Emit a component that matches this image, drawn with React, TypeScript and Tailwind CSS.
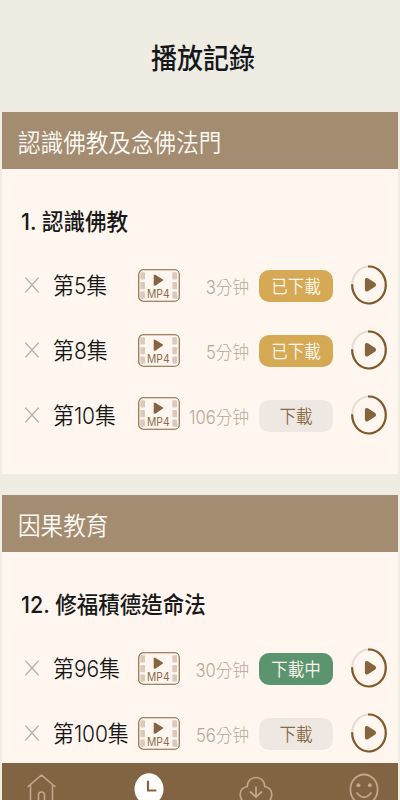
import React from "react";

type Status = "done" | "idle" | "loading";

interface Episode {
    label: string;
    minutes: number;
    status: Status;
    badgeClass?: string;
}

interface Course {
    category: string;
    title: string;
    episodes: Episode[];
}

const courses: Course[] = [
    {
        category: "認識佛教及念佛法門",
        title: "1. 認識佛教",
        episodes: [
            { label: "第5集", minutes: 3, status: "done" },
            { label: "第8集", minutes: 5, status: "done" },
            { label: "第10集", minutes: 106, status: "idle", badgeClass: "mb-[5px]" },
        ],
    },
    {
        category: "因果教育",
        title: "12. 修福積德造命法",
        episodes: [
            { label: "第96集", minutes: 30, status: "loading" },
            { label: "第100集", minutes: 56, status: "idle" },
        ],
    },
];

const statusStyles: Record<Status, { text: string; className: string }> = {
    done: { text: "已下載", className: "bg-[#d6aa54] text-[#fff7ee]" },
    idle: { text: "下載", className: "bg-[#efe8e2] text-[#8a6a45]" },
    loading: { text: "下載中", className: "bg-[#5b956f] text-[#fff7ee]" },
};

const CloseIcon = () => (
    <svg className="mb-[2px]" width="14" height="16" viewBox="0 0 14 16" fill="none" stroke="#c0ad9d" strokeWidth="1.2" strokeLinecap="round">
        <path d="M.7 1l12.6 14M13.3 1L.7 15" />
    </svg>
);

const Mp4Icon = () => (
    <svg width="42" height="33" viewBox="0 0 42 33">
        <rect x=".75" y=".75" width="40.5" height="31.5" rx="4.5" fill="none" stroke="#8a6238" strokeWidth="1.1" />
        <g fill="#d9cabd">
            <rect x="2.3" y="3.3" width="4.7" height="7.2" rx="1" />
            <rect x="2.3" y="13" width="4.7" height="7.2" rx="1" />
            <rect x="2.3" y="22.5" width="4.7" height="7.2" rx="1" />
            <rect x="34.3" y="3.3" width="4.7" height="7.2" rx="1" />
            <rect x="34.3" y="13" width="4.7" height="7.2" rx="1" />
            <rect x="34.3" y="22.5" width="4.7" height="7.2" rx="1" />
        </g>
        <path d="M16.7 6.6L24 11L16.7 15.8Z" fill="#86643f" stroke="#86643f" strokeWidth="2" strokeLinejoin="round" />
        <text x="20.3" y="29.4" textAnchor="middle" fontSize="11.6" fill="#8a6a48" fontFamily="Inter, sans-serif" textLength="22.5" lengthAdjust="spacingAndGlyphs">
            MP4
        </text>
    </svg>
);

const PlayIcon = () => (
    <svg width="36" height="40" viewBox="0 0 36 40">
        <ellipse cx="18" cy="20" rx="16.8" ry="18.5" fill="none" stroke="#e6dcd4" strokeWidth="2" />
        <path d="M17 1.5H18A16.8 18.5 0 1 1 1.2 19.2" fill="none" stroke="#81592a" strokeWidth="2.2" />
        <path d="M15 15.2Q15 13.8 16.3 14.3L23.3 18.7Q24.7 19.8 23.3 20.9L16.3 25.3Q15 25.8 15 24.5Z" fill="#86643f" stroke="#86643f" strokeWidth="2.2" strokeLinejoin="round" />
    </svg>
);

const EpisodeRow: React.FC<{ episode: Episode }> = ({ episode }) => {
    const status = statusStyles[episode.status];

    return (
        <div className="flex h-[65px] items-center pl-[23px] pr-[11px]">
            <CloseIcon />
            <div className="ml-[14px] w-[85px] shrink-0">
                <span className="inline-block origin-left scale-y-[1.1] whitespace-nowrap text-[21px] font-[350] leading-8 tracking-[-0.1px] text-[#161616]">
                    {episode.label}
                </span>
            </div>
            <div className={episode.badgeClass}>
                <Mp4Icon />
            </div>
            <div className="flex-1 pr-[10px] pt-[3px] text-right">
                <span className="inline-block scale-y-[1.1] whitespace-nowrap text-[16.6px] font-light leading-6 text-[#b9a793]">
                    {episode.minutes}分钟
                </span>
            </div>
            <button className={`h-8 w-[74px] shrink-0 rounded-[10px] text-[16.5px] font-[350] leading-8 ${status.className}`}>
                <span className="inline-block scale-y-[1.1]">{status.text}</span>
            </button>
            <div className="mb-px ml-[18px] shrink-0">
                <PlayIcon />
            </div>
        </div>
    );
};

const BottomNav = () => (
    <nav className="relative mx-[2px] flex h-[37px] shrink-0 items-start justify-between overflow-hidden bg-[#836442] pl-6 pr-[19px] pt-[9px]">
        <svg className="shrink-0" width="32" height="34" viewBox="0 0 32 34" fill="none" stroke="#bda78d" strokeWidth="1.6" strokeLinecap="round" strokeLinejoin="round">
            <path d="M2 14.5L15.5 3.2L29 14.5M4.5 12.5V32H26.5V12.5M12.5 32V23Q12.5 20 15.5 20T18.5 23V32" />
        </svg>
        <svg className="shrink-0" width="30" height="34" viewBox="0 0 30 34">
            <ellipse cx="15" cy="17" rx="14.5" ry="15.7" fill="#fffefc" />
            <path d="M14 9.5V18.5H21.5" fill="none" stroke="#86643f" strokeWidth="2.2" strokeLinecap="round" strokeLinejoin="round" />
        </svg>
        <svg className="shrink-0" width="34" height="34" viewBox="0 0 34 34" fill="none" stroke="#bda78d" strokeWidth="1.7" strokeLinecap="round" strokeLinejoin="round">
            <path d="M9 31C4 31 1.2 27 1.2 22.5C1.2 18 4.2 15.3 8.2 14.5C8.2 9 12.2 5.5 17 5.5S25.8 9 25.8 14.5C29.8 15.3 32.8 18 32.8 22.5C32.8 27 30 31 25 31Z" />
            <path d="M17 15V25M11.5 20L17 25L22.5 20" />
        </svg>
        <svg className="shrink-0" width="30" height="34" viewBox="0 0 30 34" fill="none" stroke="#bda78d" strokeWidth="1.8" strokeLinecap="round">
            <ellipse cx="15" cy="17.5" rx="13.6" ry="15" />
            <path d="M8 21Q15 29.5 22 21" />
            <circle cx="9.4" cy="13.3" r="2" fill="#bda78d" stroke="none" />
            <circle cx="20.8" cy="13.3" r="2" fill="#bda78d" stroke="none" />
        </svg>
    </nav>
);

const App: React.FC = () => {
    return (
        <div className="flex h-[800px] w-[400px] flex-col overflow-hidden bg-[#efece4] font-[Inter,'Noto_Sans_CJK_TC',sans-serif]">
            <header className="flex h-28 shrink-0 items-center justify-center pl-[6px] pt-[5px]">
                <h1 className="scale-y-[1.1] text-[26px] font-medium leading-9 text-[#15181b]">播放記錄</h1>
            </header>

            <main className="min-h-0 flex-1 overflow-hidden">
                {courses.map((course) => (
                    <section key={course.title} className="mx-[2px] mb-[21px] bg-[#fef6ef]">
                        <div className="flex h-[57px] items-center bg-[#a48c71] pl-4 pt-[4px]">
                            <h2 className="scale-y-[1.1] text-[22.6px] font-[350] leading-8 text-[#fdfaf6]">{course.category}</h2>
                        </div>
                        <div className="flex h-[84px] items-center pl-[19px] pt-5 pb-0">
                            <h3 className="scale-y-[1.08] text-[21.5px] font-medium leading-8 text-[#191919]">{course.title}</h3>
                        </div>
                        <div className="pb-[26px]">
                            {course.episodes.map((episode) => (
                                <EpisodeRow key={episode.label} episode={episode} />
                            ))}
                        </div>
                    </section>
                ))}
            </main>

            <BottomNav />
        </div>
    );
};

export default App;
